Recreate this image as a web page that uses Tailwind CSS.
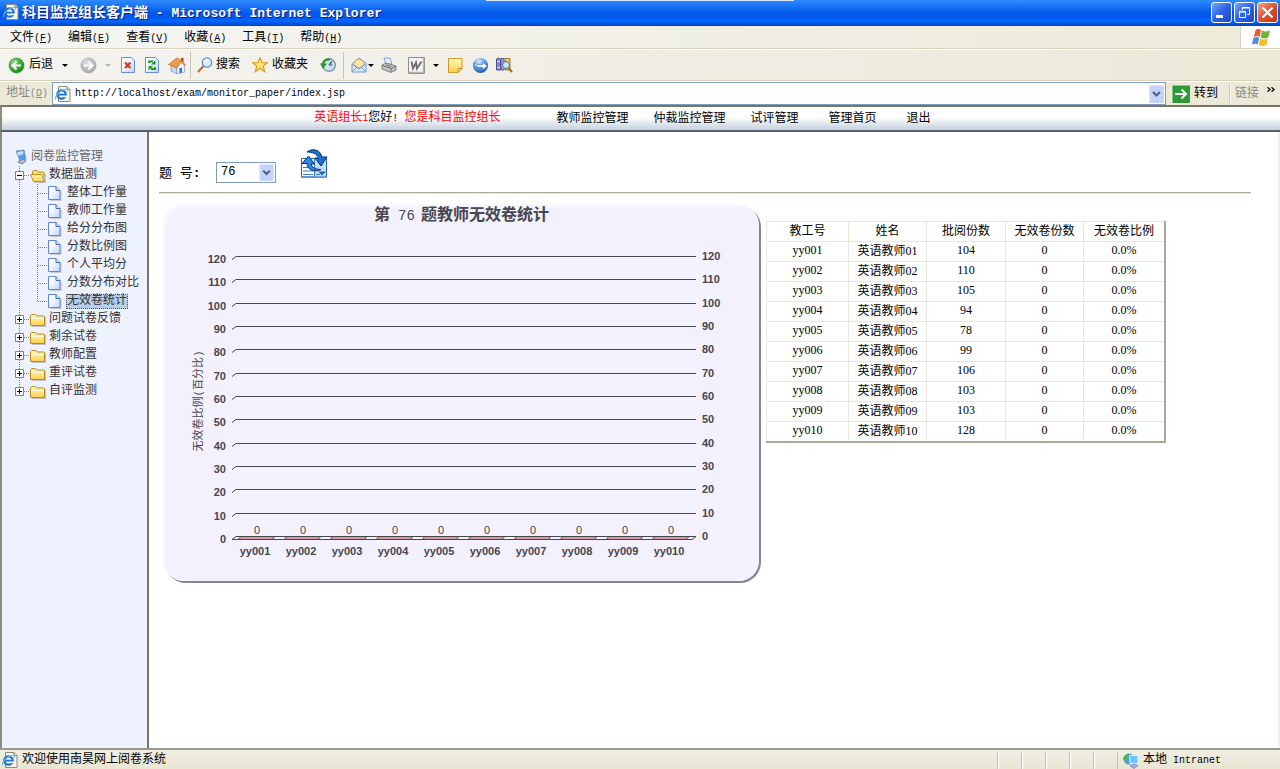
<!DOCTYPE html>
<html lang="zh-CN">
<head>
<meta charset="utf-8">
<title>科目监控组长客户端 - Microsoft Internet Explorer</title>
<script src="https://cdn.jsdelivr.net/npm/@tailwindcss/browser@4"></script>
</head>
<body class="flex h-screen flex-col overflow-hidden bg-[#ece9d8] font-['Liberation_Mono','Noto_Sans_CJK_SC',monospace] text-[12px] leading-[18px] text-black">

<svg class="absolute size-0" aria-hidden="true">
  <defs>
    <linearGradient id="gPage" x1="0" y1="0" x2="1" y2="1"><stop offset="0" stop-color="#fff"/><stop offset=".4" stop-color="#f4f8ff"/><stop offset="1" stop-color="#bcd3f8"/></linearGradient>
    <linearGradient id="gFold" x1="0" y1="0" x2="0" y2="1"><stop offset="0" stop-color="#fff9c0"/><stop offset="1" stop-color="#fbd04e"/></linearGradient>
    <radialGradient id="gGreen" cx=".35" cy=".3" r=".8"><stop offset="0" stop-color="#8fe07a"/><stop offset=".6" stop-color="#35a52b"/><stop offset="1" stop-color="#1c7a16"/></radialGradient>
    <radialGradient id="gGray" cx=".35" cy=".3" r=".8"><stop offset="0" stop-color="#dcdcdc"/><stop offset="1" stop-color="#a4a4a4"/></radialGradient>
    <radialGradient id="gBlue" cx=".4" cy=".25" r=".8"><stop offset="0" stop-color="#d4ecff"/><stop offset=".5" stop-color="#5b9fe0"/><stop offset="1" stop-color="#1c4f9c"/></radialGradient>
    <symbol id="ie" viewBox="0 0 16 16">
      <path d="M3.500.5h8.500l3 3v12H3.500z" fill="#f6f5ea" stroke="#8d8c80"/><path d="M12 .5v3h3" fill="#dcdacb" stroke="#8d8c80"/>
      <circle cx="6.500" cy="8.500" r="4.200" fill="none" stroke="#1d74cf" stroke-width="2.200"/><path d="M3 8.600h7.500" stroke="#1d74cf" stroke-width="1.800"/><path d="M8.500 9.600h4v1.600h-4z" fill="#f6f5ea"/>
      <path d="M.7 13.200C-.8 10.500 5 4 10.800 3.200c2-.2 2.200 1 1.400 2.500" fill="none" stroke="#6cb6f5" stroke-width="1.100"/>
    </symbol>
    <symbol id="page" viewBox="0 0 14 15"><path d="M2.500 2.500h7l4 3.500v9h-11z" fill="#a9acb8" opacity=".6"/><path d="M.5.500h7.500l4 4v9H.5z" fill="url(#gPage)" stroke="#5f87d6"/><path d="M8 .5v4h4" fill="#d7e5ff" stroke="#3f67bb"/></symbol>
    <symbol id="folder" viewBox="0 0 16 15"><path d="M2 5h14v10H2z" fill="#8f8f99" opacity=".5"/><path d="M.5 13.500V3.500l1-1h4L7 4h7l.5.5v9z" fill="url(#gFold)" stroke="#b98a20"/><path d="M1 6.500h13" stroke="#fffbe0"/></symbol>
    <symbol id="folderopen" viewBox="0 0 16 15"><path d="M4 6h12v8l-1 1H4z" fill="#8f8f99" opacity=".5"/><path d="M2.500 12.500V3.500l1-1H7L8.500 4h5l.5.5v3" fill="#f8dc74" stroke="#b98a20"/><path d="M.5 6.500h11l3 7H3.500z" fill="url(#gFold)" stroke="#c9951f"/></symbol>
    <symbol id="childrow" viewBox="0 0 48 18"><path d="M5.500 0v18M23.500 0v18M24 9.500h9" stroke="#7d7d85" stroke-dasharray="1 1" fill="none"/><use href="#page" x="34" y="2" width="14" height="15"/></symbol>
    <symbol id="lastrow" viewBox="0 0 48 18"><path d="M5.500 0v18M23.500 0v10M24 9.500h9" stroke="#7d7d85" stroke-dasharray="1 1" fill="none"/><use href="#page" x="34" y="2" width="14" height="15"/></symbol>
    <symbol id="plus" viewBox="0 0 16 18"><path d="M5.500 0v18M10 9.500h6" stroke="#7d7d85" stroke-dasharray="1 1"/><path d="M1.500 5.500h8v8h-8z" fill="#fff" stroke="#808080"/><path d="M3 9.500h5M5.500 7v5" stroke="#000"/></symbol>
    <symbol id="pluslast" viewBox="0 0 16 18"><path d="M5.500 0v9M10 9.500h6" stroke="#7d7d85" stroke-dasharray="1 1"/><path d="M1.500 5.500h8v8h-8z" fill="#fff" stroke="#808080"/><path d="M3 9.500h5M5.500 7v5" stroke="#000"/></symbol>
    <symbol id="minus" viewBox="0 0 16 18"><path d="M5.500 0v18M10 9.500h6" stroke="#7d7d85" stroke-dasharray="1 1"/><path d="M1.500 5.500h8v8h-8z" fill="#fff" stroke="#808080"/><path d="M3 9.500h5" stroke="#000"/></symbol>
    <symbol id="drop" viewBox="0 0 15 18"><rect width="15" height="18" rx="1.500" fill="#c3d3fb"/><path d="M.5 17V1.500l1-1H14" stroke="#dfe8ff" fill="none"/><path d="M4 7l3.500 3.500L11 7" fill="none" stroke="#4d6185" stroke-width="2.200"/></symbol>
  </defs>
</svg>

<header class="relative flex h-[26px] shrink-0 items-center gap-[2px] bg-gradient-to-b from-[#2f8bff] via-[#0457ea] to-[#0050e0] pr-[2px] pl-[3px] text-white">
  <div class="absolute inset-x-0 bottom-0 h-[10px] bg-gradient-to-b from-[#0060f8]/0 via-[#0068ff] to-[#0042c4]"></div>
  <div class="absolute top-0 left-[38%] h-px w-[24%] bg-[#dce8fa]"></div>
  <svg class="relative mb-[2px] size-4"><use href="#ie"/></svg>
  <h1 class="relative flex-1 pl-px text-[14px] leading-[24px] font-bold whitespace-pre [text-shadow:1px_1px_#0a1883]">科目监控组长客户端<span class="text-[13px]"> - Microsoft Internet Explorer</span></h1>
  <button aria-label="最小化" class="relative mb-[2px] size-[21px] rounded-[3px] border border-white bg-gradient-to-br from-[#7ba4f8] via-[#2f62e8] to-[#1c49c8]"><svg viewBox="0 0 19 19"><path d="M4 12h7v3H4z" fill="#fff"/></svg></button>
  <button aria-label="还原" class="relative mb-[2px] size-[21px] rounded-[3px] border border-white bg-gradient-to-br from-[#7ba4f8] via-[#2f62e8] to-[#1c49c8]"><svg viewBox="0 0 19 19" fill="none" stroke="#fff"><path d="M7.500 7V4.500h7V11.500H12M7 5h8M4.500 8.500h6v6h-6zM4 9h7"/></svg></button>
  <button aria-label="关闭" class="relative mb-[2px] size-[21px] rounded-[3px] border border-white bg-gradient-to-br from-[#f0a08a] via-[#e0502c] to-[#c03812]"><svg viewBox="0 0 19 19"><path d="M4.500 4.500l10 10M14.500 4.500l-10 10" stroke="#fff" stroke-width="2.200"/></svg></button>
</header>

<nav class="flex h-[23px] shrink-0 items-stretch border-b border-[#d8d2bd] bg-gradient-to-r from-[#f5f5f4] to-[#edead9]">
  <div class="flex flex-1 items-center gap-4 px-[10px] pt-[2px] [&_span]:text-[10px]">
    <button>文件<span>(<u>F</u>)</span></button><button>编辑<span>(<u>E</u>)</span></button><button>查看<span>(<u>V</u>)</span></button><button>收藏<span>(<u>A</u>)</span></button><button>工具<span>(<u>T</u>)</span></button><button>帮助<span>(<u>H</u>)</span></button>
  </div>
  <div class="flex w-10 items-center justify-center border-l border-[#d8d2bd] bg-white">
    <svg class="h-[19px] w-5" viewBox="0 0 20 19"><path d="M4.500 2C6.500.7 8.500.8 10 2L8.500 9C7 7.800 5 7.800 2.800 9z" fill="#ee5a2c"/><path d="M11 2.600c2 1.200 5 1 8-.4L17.300 9.500c-3 1.300-5.500 1.300-7.800 0z" fill="#6fb33c"/><path d="M2.500 10C4.500 8.800 6.700 8.800 8.200 10L6.700 16.500C5 15.300 3 15.500.8 16.500z" fill="#4d8de0"/><path d="M9.200 10.600c2 1.200 5 1.200 7.800 0l-1.700 6.600c-3 1.300-5.500 1.200-7.700-.2z" fill="#f5bf26"/></svg>
  </div>
</nav>

<div class="flex h-8 shrink-0 items-center border-t border-b border-t-white border-b-[#d8d2bd] bg-gradient-to-r from-[#f4f3f0] to-[#ece9d8] pl-2">
  <button class="flex items-center gap-1"><svg class="size-[17px]" viewBox="0 0 17 17"><circle cx="8.500" cy="8.500" r="7.500" fill="url(#gGreen)" stroke="#3f9a3a" stroke-width=".8"/><path d="M13 8.500H5M8.500 4.500l-4 4 4 4" fill="none" stroke="#fff" stroke-width="2.200"/></svg>后退</button>
  <button aria-label="后退列表" class="ml-[9px]"><svg class="h-[3px] w-[6px]" viewBox="0 0 6 3"><path d="M0 0h6L3 3z"/></svg></button>
  <button aria-label="前进" class="ml-3"><svg class="size-[17px]" viewBox="0 0 17 17"><circle cx="8.500" cy="8.500" r="7.500" fill="url(#gGray)" stroke="#a9a9a9" stroke-width=".8"/><path d="M4 8.500h8M8.500 4.500l4 4-4 4" fill="none" stroke="#fff" stroke-width="2.200"/></svg></button>
  <button aria-label="前进列表" class="ml-2"><svg class="h-[3px] w-[6px]" viewBox="0 0 6 3"><path d="M0 0h6L3 3z" fill="#b8b5a8"/></svg></button>
  <button aria-label="停止" class="ml-[10px]"><svg class="h-4 w-[14px]" viewBox="0 0 14 16"><path d="M.5.500h10l3 3v12H.5z" fill="url(#gPage)" stroke="#6b8fcf"/><path d="M4 5.500l5.500 5.500M9.500 5.500L4 11" stroke="#e0301c" stroke-width="2.200"/></svg></button>
  <button aria-label="刷新" class="ml-[10px]"><svg class="h-4 w-[14px]" viewBox="0 0 14 16"><path d="M.5.500h10l3 3v12H.5z" fill="url(#gPage)" stroke="#6b8fcf"/><path d="M4 6V4.500h4M10 10v2H6" fill="none" stroke="#149a1e" stroke-width="1.800"/><path d="M10.500 3v4.500H6zM3.500 13.500V9H8z" fill="#149a1e"/></svg></button>
  <button aria-label="主页" class="ml-[9px]"><svg class="h-[17px] w-[18px]" viewBox="0 0 18 17"><path d="M3 8l6 3v6l-6-3z" fill="#c8d8f2" stroke="#8397bd" stroke-width=".7"/><path d="M9 11l4-6 3.500 4v6L9 17z" fill="#eef4ff" stroke="#8397bd" stroke-width=".7"/><path d="M11.500 11h2.500v4.500l-2.500.7z" fill="#3c6cb4"/><path d="M.5 7.500L9 .8l4.500 3L8.500 11z" fill="#f39b48" stroke="#c96a22" stroke-width=".7"/><path d="M13 1h2.500v4.500L13 4z" fill="#c43c22"/><path d="M13 3.500l4.500 5" stroke="#d97b34" stroke-width="1.500"/></svg></button>
  <span class="ml-1 h-[27px] w-px bg-[#c9c4b0]"></span>
  <button class="ml-[6px] flex items-center gap-[3px]"><svg class="size-4" viewBox="0 0 16 16"><path d="M1 15l5.500-6" stroke="#b9793e" stroke-width="2.400"/><circle cx="10" cy="5.500" r="4.600" fill="#d8efff" stroke="#6a8fc4" stroke-width="1.400"/><path d="M7.500 5c.3-1.500 1.500-2.300 3-2.300" fill="none" stroke="#fff" stroke-width="1.300"/></svg>搜索</button>
  <button class="ml-3 flex items-center gap-1"><svg class="size-4" viewBox="0 0 16 16"><path d="M8 .7l2 5h5.400l-4.200 3.500 1.600 5.500L8 11.500l-4.800 3.200 1.600-5.500L.6 5.700H6z" fill="#ffe66b" stroke="#d79a1e" stroke-width="1.100"/></svg>收藏夹</button>
  <button aria-label="历史" class="ml-3"><svg class="size-4" viewBox="0 0 16 16"><circle cx="9" cy="8" r="6.300" fill="#cfe2ef" stroke="#7c9db0" stroke-width="1.500"/><path d="M9 8l3-3.500M9 8h3.500" stroke="#3d5c70" stroke-width="1.200"/><path d="M2.500 7.500C3.500 3.500 7 1.800 10 2.500" fill="none" stroke="#2c9630" stroke-width="2.400"/><path d="M0 6.500h7L3 12z" fill="#2c9630"/></svg></button>
  <span class="ml-[7px] h-[27px] w-px bg-[#c9c4b0]"></span>
  <button aria-label="邮件" class="ml-[7px]"><svg class="size-4" viewBox="0 0 16 16"><path d="M1 6.500L8 1l7 5v9H1z" fill="#dbe9ff" stroke="#7696cf"/><path d="M3.500 8V4.500L8 2l4.500 2.500V8L8 11z" fill="#fce9a6" stroke="#dba555" stroke-width=".8"/><path d="M1 7l7 5 7-5M1 15l5-5M15 15l-5-5" fill="none" stroke="#7696cf"/></svg></button>
  <button aria-label="邮件选项" class="ml-px"><svg class="h-[3px] w-[6px]" viewBox="0 0 6 3"><path d="M0 0h6L3 3z"/></svg></button>
  <button aria-label="打印" class="ml-[7px]"><svg class="size-4" viewBox="0 0 16 16"><path d="M3 1h6l2 6H5z" fill="#e6f1ff" stroke="#7da3d8"/><path d="M1 8l4-2 10 3v4l-5 2.500L1 12z" fill="#c5c5c8" stroke="#7f7f88"/><path d="M1.500 8.500L10 11.500l5-2.300M10 11.500V15M5 8l5 1.500" fill="none" stroke="#6e6e78"/></svg></button>
  <button aria-label="用 Word 编辑" class="ml-[11px]"><svg class="size-[17px]" viewBox="0 0 17 17"><path d="M.5.500h16v16H.5z" fill="#f3f3f3" stroke="#8a8a8a"/><path d="M1 15.500h14.500V1" fill="none" stroke="#b5b5b5" stroke-width="1.500"/><path d="M3.500 4.500l1.500 7 3-6 1 6 4.500-7" fill="none" stroke="#6f6f6f" stroke-width="1.900"/></svg></button>
  <button aria-label="编辑选项" class="ml-2"><svg class="h-[3px] w-[6px]" viewBox="0 0 6 3"><path d="M0 0h6L3 3z"/></svg></button>
  <button aria-label="讨论" class="ml-[9px]"><svg class="h-[15px] w-[15px]" viewBox="0 0 15 15"><path d="M.5.500h13.500v10l-4 4H.5z" fill="url(#gFold)" stroke="#d09a22"/><path d="M14 10.500h-4v4z" fill="#fff6cf" stroke="#c28a1c"/></svg></button>
  <button aria-label="信使" class="ml-[9px]"><svg class="size-[17px]" viewBox="0 0 17 17"><circle cx="8.500" cy="8.500" r="7.600" fill="url(#gBlue)"/><path d="M1.500 6c4 2 6 2 9 1.500V5l5 4-5 4v-2.500C6 10.700 3 9.500 1.500 6z" fill="#f1f8ff" stroke="#3168b2" stroke-width=".6"/></svg></button>
  <button aria-label="信息检索" class="ml-[7px]"><svg class="h-4 w-[17px]" viewBox="0 0 17 16"><path d="M.5 2l2-1 2 1v11h-4z" fill="#8a8ad8" stroke="#4a4a98"/><path d="M5 1.500h3V13H5z" fill="#a7a7e8" stroke="#5454a4"/><path d="M9 1.500h5V13H9z" fill="#f4d25e" stroke="#a37b26"/><path d="M1 4.500h3M1 10.500h3" stroke="#e6e6ff"/><circle cx="10" cy="8" r="3.500" fill="#bdeaf6" stroke="#55738e"/><path d="M12.500 11l3.500 4" stroke="#a86a1c" stroke-width="2.200"/></svg></button>
</div>

<form class="flex h-6 shrink-0 items-center border-t border-white bg-[#ece9d8]" onsubmit="return false">
  <label for="url" class="w-[52px] pl-[6px] text-[#8b897d]">地址<span class="text-[10px]">(<u>D</u>)</span></label>
  <div class="flex h-[23px] flex-1 items-center border border-[#7f9db9] bg-white px-px">
    <svg class="ml-px size-4"><use href="#ie"/></svg>
    <input id="url" class="ml-1 h-[18px] min-w-0 flex-1 text-[10px] outline-none" value="http://localhost/exam/monitor_paper/index.jsp">
    <button type="button" aria-label="地址列表"><svg class="h-[18px] w-[15px]"><use href="#drop"/></svg></button>
  </div>
  <button class="ml-[6px] flex w-[58px] items-center gap-1 border-r border-[#c9c4b0]"><svg class="size-[18px]" viewBox="0 0 18 18"><rect width="18" height="18" rx="1.500" fill="#2c9a34"/><path d="M.5 17V.5H17" stroke="#7fd07f" fill="none"/><path d="M3 9h11M9.500 4.500L14 9l-4.500 4.500" fill="none" stroke="#fff" stroke-width="2"/></svg>转到</button>
  <span class="flex w-[50px] items-center gap-2 border-l border-white pl-1 text-[#8b897d]">链接<svg class="mb-2 h-[5px] w-2" viewBox="0 0 8 5"><path d="M.5.300L3 2.500.5 4.700M4.500.300L7 2.500 4.500 4.700" fill="none" stroke="#000" stroke-width="1.300"/></svg></span>
</form>

<div class="flex h-[27px] shrink-0 items-center border-t-2 border-b-2 border-l-2 border-t-[#77756a] border-b-[#54606b] border-l-[#8f8c7d] bg-gradient-to-b from-white from-45% to-[#c3d0dd] pl-[24.4%] whitespace-nowrap">
  <p class="mr-14"><span class="text-[#ff0000]">英语组长<span class="text-[10px]">1</span></span>您好<span class="text-[10px]">! </span><span class="text-[#ff0000]">您是科目监控组长</span></p>
  <nav class="flex">
    <a href="#" class="mr-[25px]">教师监控管理</a><a href="#" class="mr-[25px]">仲裁监控管理</a><a href="#" class="mr-[30px]">试评管理</a><a href="#" class="mr-[30px]">管理首页</a><a href="#">退出</a>
  </nav>
</div>

<div class="flex min-h-0 flex-1">
  <aside class="w-[149px] shrink-0 border-r-2 border-l-2 border-r-[#77756a] border-l-[#8f8c7d] bg-[#eef2ff] pt-4 pl-3 whitespace-nowrap text-[#333] [&_li]:flex [&_li]:h-[18px] [&_li]:items-center">
    <ul>
      <li class="gap-[3px] text-[#666]"><svg class="h-4 w-[14px]" viewBox="0 0 14 16"><path d="M2 2l8-1 2 9-6 2z" fill="#4aa0ea" stroke="#7f95b5"/><path d="M3 3l6-1 .5 3L4 7z" fill="#b5e0ff"/><path d="M4 13l5-3 3 2-4 3z" fill="#b9bdd2" stroke="#7d83a0"/></svg>阅卷监控管理</li>
      <li><button aria-label="折叠"><svg class="h-[18px] w-4"><use href="#minus"/></svg></button><svg class="mr-[3px] h-[15px] w-4"><use href="#folderopen"/></svg><a href="#">数据监测</a></li>
      <li><svg class="mr-[5px] h-[18px] w-12"><use href="#childrow"/></svg><a href="#">整体工作量</a></li>
      <li><svg class="mr-[5px] h-[18px] w-12"><use href="#childrow"/></svg><a href="#">教师工作量</a></li>
      <li><svg class="mr-[5px] h-[18px] w-12"><use href="#childrow"/></svg><a href="#">给分分布图</a></li>
      <li><svg class="mr-[5px] h-[18px] w-12"><use href="#childrow"/></svg><a href="#">分数比例图</a></li>
      <li><svg class="mr-[5px] h-[18px] w-12"><use href="#childrow"/></svg><a href="#">个人平均分</a></li>
      <li><svg class="mr-[5px] h-[18px] w-12"><use href="#childrow"/></svg><a href="#">分数分布对比</a></li>
      <li><svg class="mr-1 h-[18px] w-12"><use href="#lastrow"/></svg><a href="#" class="h-[15px] bg-[#b9cfe9] px-px leading-[15px] outline-1 -outline-offset-1 outline-[#555] outline-dotted">无效卷统计</a></li>
      <li><button aria-label="展开"><svg class="h-[18px] w-4"><use href="#plus"/></svg></button><svg class="mr-[3px] h-[15px] w-4"><use href="#folder"/></svg><a href="#">问题试卷反馈</a></li>
      <li><button aria-label="展开"><svg class="h-[18px] w-4"><use href="#plus"/></svg></button><svg class="mr-[3px] h-[15px] w-4"><use href="#folder"/></svg><a href="#">剩余试卷</a></li>
      <li><button aria-label="展开"><svg class="h-[18px] w-4"><use href="#plus"/></svg></button><svg class="mr-[3px] h-[15px] w-4"><use href="#folder"/></svg><a href="#">教师配置</a></li>
      <li><button aria-label="展开"><svg class="h-[18px] w-4"><use href="#plus"/></svg></button><svg class="mr-[3px] h-[15px] w-4"><use href="#folder"/></svg><a href="#">重评试卷</a></li>
      <li><button aria-label="展开"><svg class="h-[18px] w-4"><use href="#pluslast"/></svg></button><svg class="mr-[3px] h-[15px] w-4"><use href="#folder"/></svg><a href="#">自评监测</a></li>
    </ul>
  </aside>

  <main class="min-w-0 flex-1 overflow-hidden border-r-2 border-[#f1efe2] bg-white pt-2 pr-[27px] pl-[10px]">
    <div class="box-content flex h-[52px] items-center border-b border-[#aca899] shadow-[0_1px_#ece9d8]">
      <label for="num" class="mt-4 w-[57px] text-[13px] whitespace-pre">题 号<span class="font-bold">:</span></label>
      <div class="relative mt-3 h-[21px] w-[60px]">
        <select id="num" class="h-full w-full appearance-none border border-[#7f9db9] bg-white pl-1 text-[12px]"><option>76</option></select>
        <svg class="pointer-events-none absolute top-[2px] right-[2px] h-[17px] w-[15px]"><use href="#drop"/></svg>
      </div>
      <button aria-label="刷新数据" class="mb-1 ml-6"><svg class="h-[30px] w-7" viewBox="0 0 28 30"><path d="M1.500 9.500h25V28h-25z" fill="#fff" stroke="#2c62ae"/><path d="M15 10h11v17.500H15z" fill="#bfe0fb"/><path d="M3 14.500h9M3 18.500h10M3 22h10M3 25.500h10M16 25.500h4M14.500 10v17.500M1 28h26" stroke="#4379c4"/><path d="M18 22.500h8l-4 4z" fill="#1268c8"/><path d="M7 3C12-1 20 0 22 8h5l-6 9-6-8h3.500C17 4.500 12 3 7 3z" fill="#1b6fd0" stroke="#0a2f72"/><path d="M21 20.500c-7 3.500-14 0-14-6H2L8.500 7l6 8h-3.500c.5 3.500 5 5.500 10 5.500z" fill="#2a86e4" stroke="#0a2f72"/></svg></button>
    </div>
    <div class="flex items-start gap-[5px] pt-[11px] pl-1">
      <svg class="h-[379px] w-[598px] shrink-0 overflow-visible" viewBox="163 204 598 379" role="img" aria-label="第 76 题教师无效卷统计">
        <rect x="165" y="206" width="596" height="377" rx="21" fill="#858396"/>
        <rect x="163" y="204" width="596" height="377" rx="21" fill="#f8f7fe"/>
        <rect x="166" y="207" width="593" height="374" rx="20" fill="#f3f1fd"/>
        <g font-family="'Noto Sans CJK SC'" fill="#48464e">
          <text x="374" y="220" font-size="16" font-weight="700">第</text>
          <text x="398" y="220" font-size="14" font-family="'Liberation Mono'">76</text>
          <text x="421" y="220" font-size="16" font-weight="700">题教师无效卷统计</text>
          <text transform="rotate(-90 202 401)" x="202" y="401" font-size="11" font-family="'Liberation Mono','Noto Sans CJK SC'" text-anchor="middle">无效卷比例(百分比)</text>
        </g>
        <g stroke="#48464e" fill="none" id="grid"></g>
        <g font-family="'Liberation Sans'" font-size="11" fill="#48464e" id="labels"></g>
      </svg>
      <table class="mt-[17px] w-[400px] table-fixed border-collapse border-r-2 border-b-2 border-[#aca899] text-center [&_b]:font-['Noto_Sans_CJK_SC'] [&_b]:leading-[16px] [&_b]:font-normal [&_td]:h-5 [&_td]:border [&_td]:border-[#e9e7d8] [&_td]:p-0 [&_td]:align-top [&_td]:font-['Liberation_Serif'] [&_td]:leading-[16px] [&_th]:h-5 [&_th]:border [&_th]:border-[#e9e7d8] [&_th]:p-0 [&_th]:leading-[18px] [&_th]:font-normal">
        <colgroup><col class="w-[82px]"><col class="w-[78px]"><col class="w-[79px]"><col class="w-[78px]"><col></colgroup>
        <thead><tr><th>教工号</th><th>姓名</th><th>批阅份数</th><th>无效卷份数</th><th>无效卷比例</th></tr></thead>
        <tbody>
          <tr><td>yy001</td><td><b>英语教师</b>01</td><td>104</td><td>0</td><td>0.0%</td></tr>
          <tr><td>yy002</td><td><b>英语教师</b>02</td><td>110</td><td>0</td><td>0.0%</td></tr>
          <tr><td>yy003</td><td><b>英语教师</b>03</td><td>105</td><td>0</td><td>0.0%</td></tr>
          <tr><td>yy004</td><td><b>英语教师</b>04</td><td>94</td><td>0</td><td>0.0%</td></tr>
          <tr><td>yy005</td><td><b>英语教师</b>05</td><td>78</td><td>0</td><td>0.0%</td></tr>
          <tr><td>yy006</td><td><b>英语教师</b>06</td><td>99</td><td>0</td><td>0.0%</td></tr>
          <tr><td>yy007</td><td><b>英语教师</b>07</td><td>106</td><td>0</td><td>0.0%</td></tr>
          <tr><td>yy008</td><td><b>英语教师</b>08</td><td>103</td><td>0</td><td>0.0%</td></tr>
          <tr><td>yy009</td><td><b>英语教师</b>09</td><td>103</td><td>0</td><td>0.0%</td></tr>
          <tr><td>yy010</td><td><b>英语教师</b>10</td><td>128</td><td>0</td><td>0.0%</td></tr>
        </tbody>
      </table>
    </div>
  </main>
</div>

<footer class="flex h-[21px] shrink-0 items-stretch border-t-2 border-[#9a978b] bg-gradient-to-b from-[#f1efe4] to-[#e8e5d2]">
  <p class="flex flex-1 items-center gap-1 pt-px pl-[2px]"><svg class="size-4"><use href="#ie"/></svg>欢迎使用南昊网上阅卷系统</p>
  <div class="flex pt-[2px] [&>i]:w-6 [&>i]:border-l [&>i]:border-[#c5c1b0] [&>i]:shadow-[inset_1px_0_#fff]"><i></i><i></i><i></i><i></i><i></i></div>
  <p class="mt-[2px] flex w-[163px] items-center gap-1 border-l border-[#c5c1b0] pl-[5px]"><svg class="size-4" viewBox="0 0 16 16"><circle cx="6" cy="6" r="5.500" fill="#4b9be6"/><path d="M2 2.500C5 0 6 2 5 5s-2 3-4 2-.5-3 1-4.500z" fill="#4fb93c"/><path d="M6.500 2.500h8.500v8H7z" fill="#6cc4fb" stroke="#e9eef8"/><path d="M7 13l4-2 4 1.500-4 3z" fill="#a7b0e2" stroke="#6b74ac" stroke-width=".7"/></svg><span class="whitespace-pre">本地<span class="text-[10px]"> Intranet</span></span></p>
</footer>

<script>
  let grid = '', labels = '';
  for (let i = 0; i <= 12; i++) {
    const v = 120 - i * 10, y = Math.round(256 + i * 23.33) + 0.5;
    grid += `<path d="M232 ${y + 3}l4-3H696"/>`;
    labels += `<text x="226" y="${y + 6.5}" text-anchor="end" font-weight="700">${v}</text><text x="702" y="${y + 3.5}" font-weight="700">${v}</text>`;
  }
  grid += '<path d="M232 539.5H692l4-3"/>';
  for (let i = 0; i < 10; i++) {
    const x = 240 + i * 46;
    grid += `<path d="M${x - 2} 539.5l3-3h34l-3 3z" fill="#d29c9c"/>`;
    labels += `<text x="${x + 17}" y="534" text-anchor="middle">0</text><text x="${x + 15}" y="555" text-anchor="middle" font-weight="700">yy${String(i + 1).padStart(3, '0')}</text>`;
  }
  document.getElementById('grid').innerHTML = grid;
  document.getElementById('labels').innerHTML = labels;
</script>
</body>
</html>
